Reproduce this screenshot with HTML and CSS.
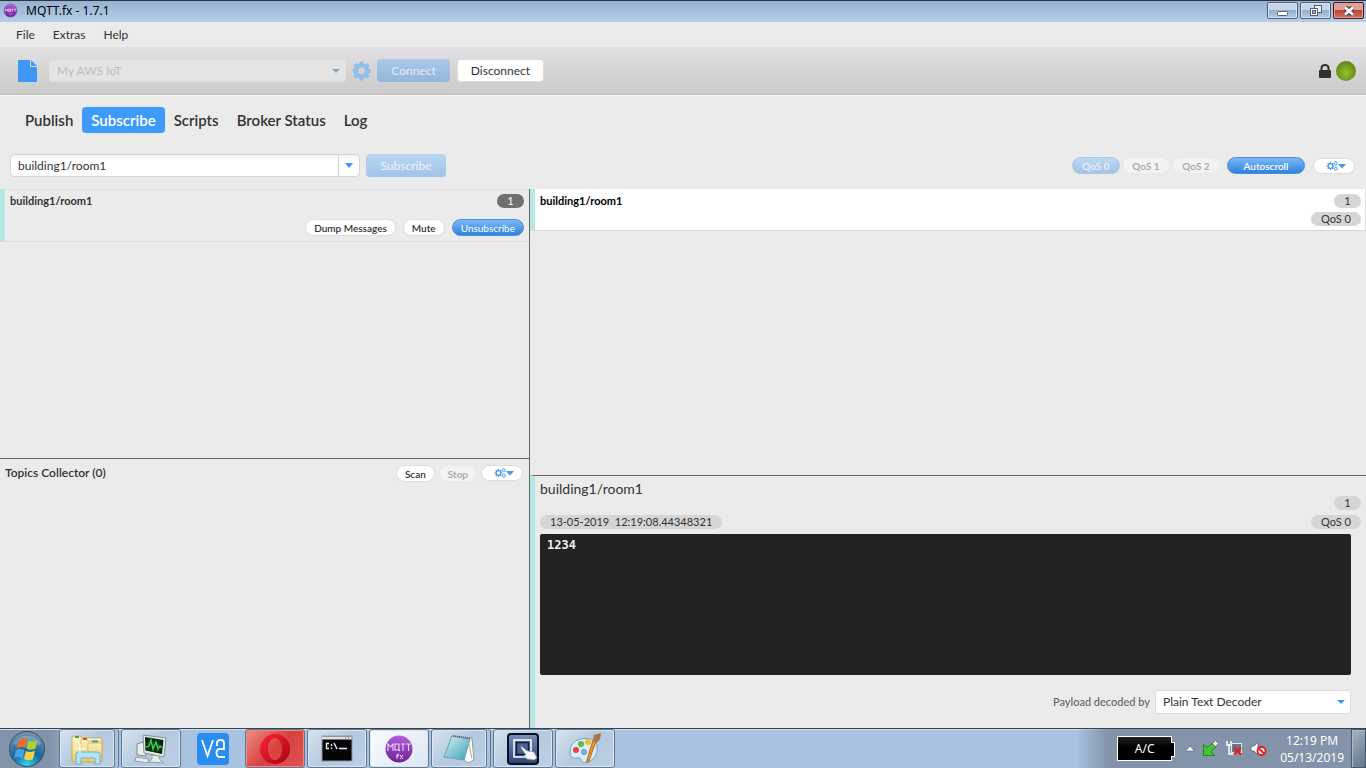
FILE: index.html
```html
<!DOCTYPE html>
<html lang="en">
<head>
<meta charset="utf-8">
<title>MQTT.fx - 1.7.1</title>
<link rel="stylesheet" href="styles.css">
</head>
<body>
<svg class="defs" aria-hidden="true">
  <defs>
    <linearGradient id="purple" x1="0" y1="0" x2="0" y2="1"><stop offset="0" stop-color="#b45ce0"/><stop offset="1" stop-color="#6b2191"/></linearGradient>
    <radialGradient id="orb" cx=".5" cy=".95" r=".95"><stop offset="0" stop-color="#35d4f2"/><stop offset=".45" stop-color="#17679c"/><stop offset="1" stop-color="#7795ac"/></radialGradient>
    <linearGradient id="folder" x1="0" y1="0" x2="0" y2="1"><stop offset="0" stop-color="#fffbd0"/><stop offset="1" stop-color="#eacb6b"/></linearGradient>
    <linearGradient id="opera" x1="0" y1="0" x2="1" y2="1"><stop offset="0" stop-color="#ff2536"/><stop offset="1" stop-color="#a70014"/></linearGradient>
    <linearGradient id="paper" x1="0" y1="0" x2="1" y2="1"><stop offset="0" stop-color="#d4f3f7"/><stop offset="1" stop-color="#3b9fb6"/></linearGradient>
    <linearGradient id="navy" x1="0" y1="0" x2="0" y2="1"><stop offset="0" stop-color="#7890bd"/><stop offset="1" stop-color="#2c4171"/></linearGradient>
    <path id="gear" fill-rule="evenodd" d="M8 .5h4l.6 2.6 1.7.7 2.2-1.4 2.8 2.8-1.4 2.2.7 1.7 1.9.4v3.800l-1.900.5-.7 1.700 1.400 2.200-2.800 2.800-2.200-1.400-1.700.7-.6 2.700H8l-.6-2.700-1.700-.7-2.200 1.400L.7 17.700l1.400-2.200-.7-1.700L0 13.300V9.500l1.400-.4.7-1.700L.7 5.200l2.800-2.800 2.200 1.400 1.700-.7zM10 7.400a3.700 3.700 0 1 0 0 7.400 3.700 3.700 0 0 0 0-7.400z"/>
    <symbol id="gears" viewBox="0 0 20 10">
      <circle cx="4.500" cy="5" r="2.400" fill="none" stroke="#4198f2" stroke-width="1.300"/>
      <path d="M4.500 1v1.500M4.500 7.500V9M.5 5H2M7 5h1.500M1.700 2.200l1 1M6.300 6.800l1 1M1.700 7.800l1-1M6.300 3.200l1-1" stroke="#4198f2" stroke-width="1.200"/>
      <circle cx="9.800" cy="2.300" r="1.500" fill="none" stroke="#4198f2"/>
      <circle cx="9.800" cy="7.700" r="1.500" fill="none" stroke="#4198f2"/>
      <path d="M12 3h8l-4 4.500z" fill="#4198f2"/>
    </symbol>
  </defs>
</svg>

<header class="titlebar">
  <svg class="app-icon" viewBox="0 0 16 16"><circle cx="8" cy="8" r="7" fill="url(#purple)" stroke="#82609b" stroke-width="1" stroke-dasharray="1 1"/><path d="M2.500 9V6.500L4 8l1-1.500V9M6 6.500h2V9H6zM9 6.500h2M10 6.500V9M12 6.500h2M13 6.500V9M7 11.500l1 1 1.500-1" fill="none" stroke="#e3cdef" stroke-width=".9"/></svg>
  <h1 class="title">MQTT.fx - 1.7.1</h1>
  <button class="win-btn" aria-label="Minimize"><svg width="12" height="12" viewBox="0 0 12 12"><rect x=".5" y="6.500" width="10" height="4" rx="1" fill="#fff" stroke="#53617a"/></svg></button>
  <button class="win-btn" aria-label="Restore"><svg width="12" height="12" viewBox="0 0 12 12"><rect x="4.500" y=".5" width="7" height="7" fill="#eef4fa" stroke="#53617a"/><rect x=".5" y="3.500" width="7" height="7" fill="#fff" stroke="#53617a"/><rect x="2.500" y="5.500" width="3" height="3" fill="#9fb8d0" stroke="#53617a"/></svg></button>
  <button class="win-btn close" aria-label="Close"><svg width="12" height="12" viewBox="0 0 12 12"><path d="M2.500 2.500l7 7M9.500 2.500l-7 7" stroke="#584650" stroke-width="5"/><path d="M2 2.500l8 7M10 2.500l-8 7" stroke="#fff" stroke-width="2.600"/></svg></button>
</header>

<nav class="menubar" aria-label="Menu"><button>File</button><button>Extras</button><button>Help</button></nav>

<section class="toolbar">
  <button class="bare" aria-label="New profile"><svg width="20" height="22" viewBox="0 0 20 22"><path d="M0 0h12v7h7v15H0z" fill="#3f98f7"/><path d="M13 0l6 6h-6z" fill="#3f98f7"/></svg></button>
  <div class="picker profile">
    <select aria-label="Connection profile" disabled><option>My AWS IoT</option></select>
    <svg class="arrow" viewBox="0 0 8 4"><path d="M0 0h8L4 4z" fill="#78abd9"/></svg>
  </div>
  <button class="bare gear" aria-label="Settings"><svg width="19" height="20" viewBox="0 0 20 23"><use href="#gear" fill="#93bfea"/></svg></button>
  <button class="btn connect" disabled>Connect</button>
  <button class="btn disconnect">Disconnect</button>
  <span class="spacer"></span>
  <svg class="lock" width="12" height="14" viewBox="0 0 12 14"><path d="M2.500 7V4a3.500 3 0 0 1 7 0v3" fill="none" stroke="#2f2f2f" stroke-width="2"/><rect y="6" width="12" height="8" rx="1" fill="#2f2f2f"/></svg>
  <span class="status" role="img" aria-label="Connected"></span>
</section>

<nav class="tabs" aria-label="Views">
  <button>Publish</button><button class="active">Subscribe</button><button>Scripts</button><button>Broker Status</button><button>Log</button>
</nav>

<form class="subscribe-bar">
  <div class="combo">
    <input type="text" aria-label="Topic" value="building1/room1">
    <button type="button" aria-label="Recent topics"><svg width="8" height="5" viewBox="0 0 8 5"><path d="M0 0h8L4 5z" fill="#4198f2"/></svg></button>
  </div>
  <button type="button" class="btn subscribe" disabled>Subscribe</button>
  <span class="spacer"></span>
  <div class="qos">
    <button type="button" class="pill blue" disabled>QoS 0</button>
    <button type="button" class="pill" disabled>QoS 1</button>
    <button type="button" class="pill" disabled>QoS 2</button>
  </div>
  <button type="button" class="pill blue autoscroll">Autoscroll</button>
  <button type="button" class="pill options" aria-label="View options"><svg width="20" height="10"><use href="#gears"/></svg></button>
</form>

<main class="split">
  <section class="left">
    <div class="subscriptions">
      <article class="subscription">
        <div class="line"><h2 class="topic">building1/room1</h2><span class="tag dark">1</span></div>
        <div class="actions">
          <button class="pill">Dump Messages</button><button class="pill">Mute</button><button class="pill blue unsubscribe">Unsubscribe</button>
        </div>
      </article>
    </div>
    <div class="collector">
      <h2>Topics Collector (0)</h2>
      <button class="pill">Scan</button><button class="pill" disabled>Stop</button>
      <button class="pill options" aria-label="Collector options"><svg width="20" height="10"><use href="#gears"/></svg></button>
    </div>
  </section>
  <section class="right">
    <div class="messages">
      <article class="message">
        <h2 class="topic">building1/room1</h2>
        <div class="tags"><span class="tag">1</span><span class="tag">QoS 0</span></div>
      </article>
    </div>
    <article class="detail">
      <h2>building1/room1</h2>
      <div class="line end"><span class="tag">1</span></div>
      <div class="line"><time class="tag">13-05-2019&nbsp; 12:19:08.44348321</time><span class="tag">QoS 0</span></div>
      <pre class="payload">1234</pre>
      <div class="decoder">
        <label for="decoder">Payload decoded by</label>
        <div class="picker">
          <select id="decoder"><option>Plain Text Decoder</option></select>
          <svg class="arrow" viewBox="0 0 8 4"><path d="M0 0h8L4 4z" fill="#4198f2"/></svg>
        </div>
      </div>
    </article>
  </section>
</main>

<footer class="taskbar">
  <button class="start" aria-label="Start"><svg width="38" height="38" viewBox="0 0 38 38"><circle cx="19" cy="19" r="17.500" fill="url(#orb)" stroke="#345169"/><path d="M5 14a15 13 0 0 1 28 0q-14 7-28 0" fill="#fff" opacity=".22"/><path d="M11 10q4-3 8-.5l-2 8.500q-4-2-8.500.2z" fill="#ef6a2b"/><path d="M20.500 10.500q4.500 2.300 9-.2l-2.200 8.500q-4.400 2-8.800 0z" fill="#a8d52d"/><path d="M8 20q4-2.200 8.500 0l-2.200 8q-4-2-8.300.5z" fill="#49a3e6"/><path d="M18 21q4.500 2 9-.2l-2.200 8.500q-4.500 2.200-8.800-.3z" fill="#ffd041"/></svg></button>
  <button class="task stacked" aria-label="Explorer"><svg width="34" height="34" viewBox="0 0 34 34"><path d="M2 6q0-2 2-2h6l2 2h18q2 0 2 2v20q0 2-2 2H4q-2 0-2-2z" fill="url(#folder)" stroke="#d0ab4d"/><path d="M11 30V7h5l2 2h14M18 30V11h14" fill="none" stroke="#dcb95f"/><path d="M5 5h4" stroke="#28a945" stroke-width="2"/><path d="M13 7h4" stroke="#df4630" stroke-width="2"/><path d="M22 9.500h6" stroke="#3896d6" stroke-width="2"/><path d="M6 32V22q0-2 2-2h19q3 0 3 2v10h-5v-6H11v6z" fill="#b5e3f7" stroke="#6ab3d9"/><path d="M10 12v10M5 17h10" stroke="#fff"/></svg></button>
  <button class="task" aria-label="Task monitor"><svg width="34" height="34" viewBox="0 0 34 34"><path d="M3 12l9-3v15l-9-1z" fill="#e9edee" stroke="#7e898e"/><path d="M9 3l23 3-2 19-20-4z" fill="#e5e8e8" stroke="#859197"/><path d="M11 5l18.500 3-1.500 14-16.500-3.500z" fill="#08230d"/><path d="M15 6l-1 13M20 7l-1 13M25 8l-2 13M11 11l18 3M11 16l17 3" stroke="#155b22" stroke-width=".7"/><path d="M12 15l3-1 2-6 2 9 3-7 2 7 2-3 2 2" fill="none" stroke="#35cf50" stroke-width="1.500"/><path d="M18 23v4l-3 3 15 1-4-3-1-4zM2 25l13 2-1 4-13-2z" fill="#e7eded" stroke="#94a1a5"/></svg></button>
  <button class="task plain" aria-label="VNC"><svg width="32" height="32" viewBox="0 0 32 32"><rect width="32" height="32" rx="4" fill="#288df0"/><path d="M5 7l5.500 16L16 7M20 13V10q0-3 3.500-3t3.500 3v6h-4q-3.500 0-3.500 4t3.500 4H28" fill="none" stroke="#fff" stroke-width="1.800"/></svg></button>
  <button class="task red" aria-label="Opera"><svg width="32" height="32" viewBox="0 0 32 32"><path fill-rule="evenodd" d="M16 1a15 15 0 1 0 .1 30A15 15 0 0 0 16 1zm0 4c4 0 7 5 7 11s-3 11-7 11-7-5-7-11 3-11 7-11z" fill="url(#opera)"/></svg></button>
  <button class="task" aria-label="Command prompt"><svg width="32" height="28" viewBox="0 0 32 28"><rect x="1" y="1" width="30" height="25" fill="#050505" stroke="#8d969e"/><path d="M1 3h30" stroke="#dce2e7" stroke-width="3"/><path d="M24 3h1M27 3h1M30 3h1" stroke="#586577"/><path d="M8 8.500H5.500v5H8M10.500 9v2M10.500 12.500v1.500M13 8l3 6M18 13.500h8" fill="none" stroke="#eee" stroke-width="1.400"/></svg></button>
  <button class="task current" aria-label="MQTT.fx"><svg width="28" height="28" viewBox="0 0 28 28"><circle cx="14" cy="14" r="13.500" fill="url(#purple)"/><path d="M3 16V9l2.500 3L8 9v7M10 9h4v6h-4zM13 14l2 2M16 9h4M18 9v7M21 9h5M23.500 9v7M12 24v-4l2-1M11 21h3M15 20l3 4M18 20l-3 4" fill="none" stroke="#ecd6f7" stroke-width="1.100"/></svg></button>
  <button class="task stacked" aria-label="Notepad"><svg width="32" height="32" viewBox="0 0 32 32"><path d="M10 3l19 2 2 22-6 3-4-3z" fill="#f9fafa" stroke="#8f9da3"/><path d="M9 3l18 3-6 21-20-3z" fill="url(#paper)" stroke="#72a1ac"/><path d="M10 3l18 2.500" stroke="#636d70" stroke-width="2" stroke-dasharray="1 1"/><path d="M26 11l3 15" stroke="#c7b673"/></svg></button>
  <button class="task" aria-label="Remote desktop"><svg width="32" height="32" viewBox="0 0 32 32"><rect x="1" y="1" width="30" height="30" rx="3" fill="url(#navy)" stroke="#07101e" stroke-width="2"/><path d="M7 7h17v17H7z" fill="none" stroke="#fff" stroke-width="1.500"/><path d="M9.500 9.500h12v12h-12z" fill="#4b628f" stroke="#111d37" stroke-width="1.500"/><path d="M14 13l5 4 2 1 6 1 3 6-3 2-7-1-4-3 3-1-5-7z" fill="#f5f7fa" stroke="#8290a9" stroke-width=".7"/></svg></button>
  <button class="task" aria-label="Paint"><svg width="34" height="34" viewBox="0 0 34 34"><path d="M2 20C2 9 12 5 22 7c9 2 9 14 3 20-6 5-12 4-12 1 0-4-5-1-8-2-2-1-3-3-3-6z" fill="#d8edf8" stroke="#70a4c9"/><circle cx="8" cy="18" r="3" fill="#e5473c"/><circle cx="13" cy="12" r="3" fill="#61b849"/><circle cx="20" cy="10" r="3" fill="#f3bd2f"/><circle cx="16" cy="20" r="2.500" fill="#8ab4d7" stroke="#5c8bb7"/><path d="M28 9L21 29q-3 4-2-1l6-20z" fill="#eb9332" stroke="#be6821"/><path d="M25 8l1-5 7-2-1 6-3 4z" fill="#a7734e"/></svg></button>
  <span class="spacer"></span>
  <div class="tray">
    <div class="battery">A/C</div>
    <button class="bare" aria-label="Show hidden icons"><svg width="10" height="7" viewBox="0 0 10 7"><path d="M.5 6h9L5 1z" fill="#f8fafc" stroke="#52627b" stroke-width=".6"/></svg></button>
    <svg width="17" height="17" viewBox="0 0 17 17"><path d="M9 5l4.500-4.500 3 3L12 8z" fill="#eee" stroke="#777"/><path d="M1.500 4.500l3.500 3 5-4 3.500 3.500-4.500 5 4 3.500H1.500z" fill="#46c434" stroke="#1b8b1c"/></svg>
    <svg width="17" height="17" viewBox="0 0 17 17"><path d="M1 1v4h4V1M3 5v9h5" fill="none" stroke="#fff" stroke-width="1.500"/><rect x="5.500" y="3.500" width="10" height="9" fill="#66758a" stroke="#e8ecf1"/><path d="M8 7.500l7 7M15 7.500l-7 7" stroke="#e21b18" stroke-width="2.300"/></svg>
    <svg width="17" height="17" viewBox="0 0 17 17"><path d="M1 6h3l4-4v13l-4-4H1z" fill="#f2f4f5" stroke="#6b7581"/><circle cx="11.500" cy="11" r="4" fill="#fff" stroke="#e21b18" stroke-width="1.800"/><path d="M9 8.500l5 5" stroke="#e21b18" stroke-width="1.800"/></svg>
    <div class="clock"><time>12:19 PM</time><span>05/13/2019</span></div>
    <button class="show-desktop" aria-label="Show desktop"></button>
  </div>
</footer>
</body>
</html>
```

FILE: styles.css
```css
* { box-sizing: border-box; }
body { margin: 0; min-height: 100vh; display: flex; flex-direction: column; background: #ebebeb; color: #333; font: 12px/16px Lato, sans-serif; }
button, input, select { font: inherit; color: inherit; margin: 0; }
button { border: 0; padding: 0; background: none; display: flex; align-items: center; justify-content: center; flex: none; white-space: nowrap; }
h1, h2 { margin: 0; font: inherit; }
svg { flex: none; display: block; }
.defs { position: absolute; width: 0; height: 0; }
.spacer { flex: 1; }

.titlebar { display: flex; align-items: center; height: 22px; padding: 0 2px 2px 3px; border-top: 1px solid #30343c; background: linear-gradient(#97b2d1, #b5cfe9); color: #000; gap: 2px; }
.app-icon { width: 15px; height: 15px; }
.title { flex: 1; padding-left: 6px; font-family: "Noto Sans", sans-serif; font-size: 12px; }
.win-btn { width: 31px; height: 17px; border: 1px solid #506078; border-radius: 2px; background: linear-gradient(#c5d7e9 45%, #92afca 50%, #b5cde3); box-shadow: inset 0 0 0 1px #d5e3f0; }
.titlebar .close { border-color: #4c1820; background: linear-gradient(#dda096 45%, #b8452f 50%, #cf735d); box-shadow: inset 0 0 0 1px #e0a096; }

.menubar { display: flex; gap: 18px; height: 25px; padding: 0 16px; }
.toolbar { display: flex; align-items: center; height: 48px; padding: 0 10px 0 18px; border-bottom: 1px solid #bbb; background: linear-gradient(#e2e0e2, #cbcbcb); box-shadow: 0 1px #fafafa; }
.picker { display: grid; align-items: center; }
.picker > * { grid-area: 1 / 1; }
.picker select { appearance: none; width: 100%; height: 22px; padding: 0 8px; border: 1px solid #dcdcdc; border-radius: 3px; background: #fff; opacity: 1; }
.arrow { width: 8px; height: 4px; justify-self: end; margin-right: 6px; pointer-events: none; }
.profile { width: 297px; margin-left: 11px; }
.profile select { background: #e4e4e4; border-color: #e1e1e1; color: #bdbdbd; padding: 0 7px; }
.gear { margin: 0 6px; }
.btn { height: 23px; border-radius: 4px; }
.connect { width: 73px; background: linear-gradient(#aac9ea, #94b6db); color: #e1ebf5; }
.disconnect { width: 87px; margin-left: 7px; background: #fff; border: 1px solid #ddd; }
.status { width: 20px; height: 20px; margin-left: 5px; border-radius: 50%; background: radial-gradient(circle at 50% 60%, #8fc02a, #71991f 50%, #4b6b16); }

.tabs { display: flex; height: 49px; align-items: center; padding: 0 16px; font-size: 15px; font-weight: 600; }
.tabs button { height: 26px; padding: 0 9px; border-radius: 4px; }
.tabs .active { background: #3f9bfb; color: #fff; }

.subscribe-bar { display: flex; align-items: center; height: 45px; padding: 0 11px 2px 10px; }
.combo { display: flex; width: 350px; height: 23px; border: 1px solid #d6d6d6; border-radius: 4px; background: linear-gradient(#f1f1f1, #fff 5px); overflow: hidden; }
.combo input { flex: 1; min-width: 0; border: 0; padding: 0 7px; background: none; }
.combo button { width: 21px; border-left: 1px solid #d6d6d6; }
.subscribe { width: 80px; margin-left: 6px; background: linear-gradient(#b9d7f3, #a3c4e7); color: #eef4fa; }
.qos { display: flex; gap: 2px; margin-right: 7px; }
.pill { height: 17px; padding: 0 8px; border-radius: 9px; border: 1px solid #ddd; background: #fff; font-size: 10px; font-weight: 600; line-height: 14px; }
.pill:disabled { background: #f3f3f3; border-color: #e9e9e9; color: #a5a5a5; }
.pill.blue { background: linear-gradient(#7bb8f8, #2f84dc); border-color: #4b8fd4; color: #fff; }
.pill.blue:disabled { background: linear-gradient(#bdd9f4, #a2c4e8); border-color: #aac7e3; color: #edf4fb; }
.qos .pill { width: 48px; }
.autoscroll { width: 78px; }
.options { width: 42px; padding: 0 0 0 3px; margin-left: 8px; height: 16px; }

.split { flex: 1; display: flex; }
.left { width: 38.8%; display: flex; flex-direction: column; border-right: 1px solid #666; }
.right { flex: 1; min-width: 0; display: flex; flex-direction: column; }
.subscriptions { flex: 1; }
.subscription { height: 53px; border-left: 5px solid #b5e8e5; border-top: 1px solid #e0e0e0; border-bottom: 1px solid #ddd; padding: 3px 5px 0 5px; display: flex; flex-direction: column; gap: 10px; }
.line { display: flex; align-items: center; justify-content: space-between; }
.end { justify-content: flex-end; }
.topic { font-size: 11px; font-weight: 700; }
.actions { display: flex; justify-content: flex-end; gap: 7px; }
.actions .unsubscribe { font-weight: 400; }
.tag { min-width: 27px; padding: 0 10px; border-radius: 7px; background: #d6d6d6; font-size: 11px; line-height: 14px; text-align: center; white-space: pre; }
.tag.dark { background: #707070; color: #fff; }
.collector { display: flex; align-items: flex-start; height: 270px; padding: 6px; border-top: 1px solid #666; gap: 4px; }
.collector h2 { flex: 1; margin-left: -1px; font-size: 12px; font-weight: 600; }
.collector .options { margin-left: 0; padding: 0 0 0 3px; }
.messages { flex: 1; }
.message { display: flex; justify-content: space-between; height: 42px; padding: 4px 4px 0 5px; border-left: 5px solid #b5e8e5; border-right: 1px solid #ddd; border-bottom: 1px solid #d6d6d6; background: #fff; color: #000; }
.tags { display: flex; flex-direction: column; align-items: flex-end; gap: 4px; padding-top: 1px; color: #333; }
.detail { min-height: 253px; display: flex; flex-direction: column; padding: 5px; border-left: 5px solid #b5e8e5; border-top: 1px solid #666; }
.detail h2 { font-size: 14px; line-height: 15px; }
.detail .line { margin-bottom: 5px; }
.payload { margin: 0 10px 0 0; height: 141px; padding: 3px 7px; border-radius: 2px; background: #222; color: #eee; font: 700 12px/16px "DejaVu Sans Mono", monospace; }
.decoder { display: flex; align-items: center; justify-content: flex-end; gap: 5px; padding: 15px 10px 0 0; color: #666; font-size: 11px; font-weight: 500; }
.decoder .picker { width: 196px; color: #333; font-size: 12px; font-weight: 400; }
.decoder select { height: 24px; padding: 0 7px; }

.taskbar { display: flex; height: 40px; border-top: 1px solid #35434f; background: linear-gradient(90deg, #8293aa, #8293aa 50px, #a9c2df 80px); box-shadow: inset 0 1px #d2e0ee; }
.start { width: 59px; padding-right: 6px; }
.task { width: 60px; margin-right: 2px; border: 1px solid #617790; border-radius: 3px; background: linear-gradient(135deg, #d8e3ef, #b4c9df 50%, #bdd0e5); box-shadow: inset 0 0 0 1px #d9e6f3; }
.stacked { width: 56px; margin-right: 6px; box-shadow: inset 0 0 0 1px #d9e6f3, 3px 0 #adc4de, 4px 0 #617790; }
.plain { background: none; border-color: transparent; box-shadow: none; }
.red { background: linear-gradient(135deg, #ec8d88, #d7423e 50%, #e25450); box-shadow: inset 0 0 0 1px #ec8c88; }
.current { background: linear-gradient(135deg, #fafcfe, #dbe6f3); }
.tray { display: flex; align-items: center; gap: 7px; padding-left: 40px; background: linear-gradient(90deg, transparent, #8293aa 32px); color: #fff; font-family: "Noto Sans", sans-serif; }
.battery { position: relative; width: 55px; height: 25px; margin-right: 6px; border: 1px solid #fff; background: linear-gradient(#222, #000 45%); line-height: 23px; text-align: center; }
.battery::after { content: ""; position: absolute; left: 100%; top: 5px; width: 3px; height: 13px; background: #000; border: 1px solid #fff; border-left: 0; }
.clock { display: flex; flex-direction: column; align-items: center; margin-left: 6px; line-height: 17px; }
.show-desktop { width: 15px; align-self: stretch; border: 1px solid #47596b; background: linear-gradient(135deg, #a9b4c2, #60758b); box-shadow: inset 1px 1px #aebac8; }
```
